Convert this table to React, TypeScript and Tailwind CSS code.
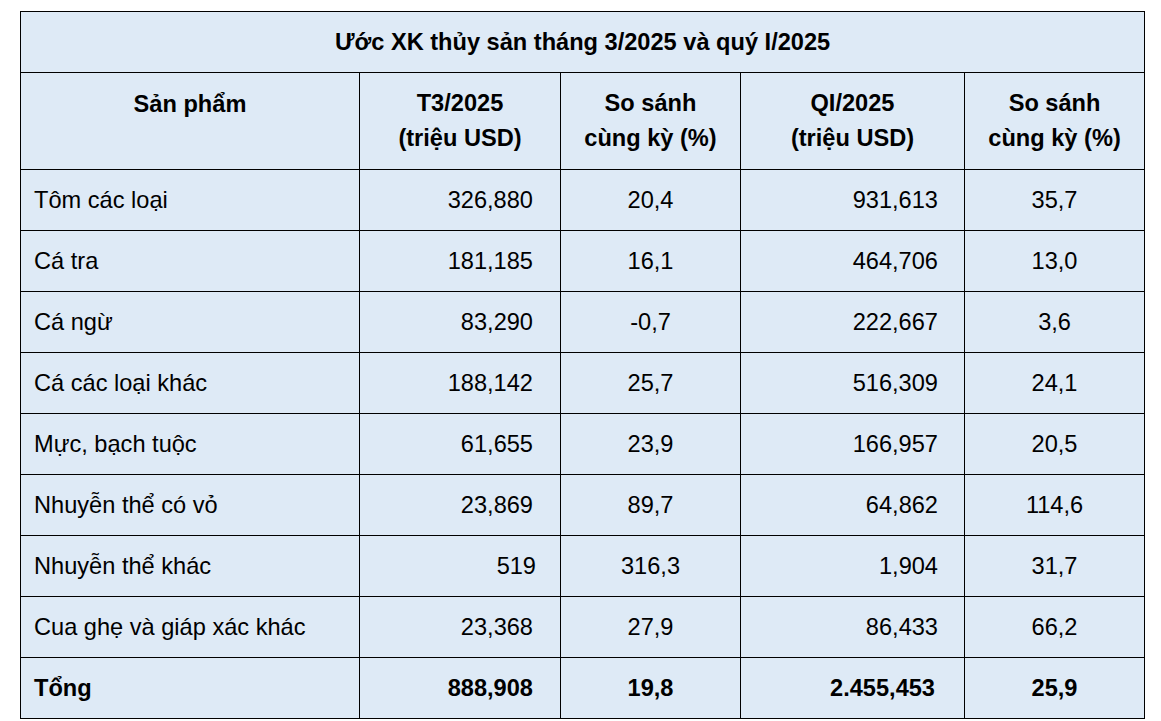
const rows = [
	['Tôm các loại', '326,880', '20,4', '931,613', '35,7'],
	['Cá tra', '181,185', '16,1', '464,706', '13,0'],
	['Cá ngừ', '83,290', '-0,7', '222,667', '3,6'],
	['Cá các loại khác', '188,142', '25,7', '516,309', '24,1'],
	['Mực, bạch tuộc', '61,655', '23,9', '166,957', '20,5'],
	['Nhuyễn thể có vỏ', '23,869', '89,7', '64,862', '114,6'],
	['Nhuyễn thể khác', '519', '316,3', '1,904', '31,7'],
	['Cua ghẹ và giáp xác khác', '23,368', '27,9', '86,433', '66,2'],
];

const cell = 'border border-black px-0 align-middle';

export default function App() {
	return (
		<div
			className="min-h-screen bg-white pt-[11px] pl-[20px] text-black"
			style={{ fontFamily: '"Liberation Sans", Arial, sans-serif' }}
		>
			<table className="table-fixed border-collapse bg-[#deeaf6] text-[23.6px] leading-[35px] w-[1125px]">
				<colgroup>
					<col className="w-[339px]" />
					<col className="w-[201px]" />
					<col className="w-[180px]" />
					<col className="w-[224px]" />
					<col className="w-[180px]" />
				</colgroup>
				<thead>
					<tr className="h-[61px]">
						<th colSpan={5} className={`${cell} text-center font-bold`}>
							Ước XK thủy sản tháng 3/2025 và quý I/2025
						</th>
					</tr>
					<tr className="h-[97px]">
						<th className={`${cell} text-center font-bold align-top pt-[14px]`}>
							Sản phẩm
						</th>
						<th className={`${cell} text-center font-bold`}>
							T3/2025
							<br />
							(triệu USD)
						</th>
						<th className={`${cell} text-center font-bold`}>
							So sánh
							<br />
							cùng kỳ (%)
						</th>
						<th className={`${cell} text-center font-bold`}>
							QI/2025
							<br />
							(triệu USD)
						</th>
						<th className={`${cell} text-center font-bold`}>
							So sánh
							<br />
							cùng kỳ (%)
						</th>
					</tr>
				</thead>
				<tbody>
					{rows.map((r) => (
						<tr key={r[0]} className="h-[61px]">
							<td className={`${cell} pl-[13px]`}>{r[0]}</td>
							{/* 519 sits a few px further right in the source */}
							<td className={`${cell} text-right ${r[1] === '519' ? 'pr-[24px]' : 'pr-[27px]'}`}>{r[1]}</td>
							<td className={`${cell} text-center`}>{r[2]}</td>
							<td className={`${cell} text-right pr-[26px]`}>{r[3]}</td>
							<td className={`${cell} text-center`}>{r[4]}</td>
						</tr>
					))}
					<tr className="h-[61px] font-bold">
						<td className={`${cell} pl-[13px]`}>Tổng</td>
						<td className={`${cell} text-right pr-[27px]`}>888,908</td>
						<td className={`${cell} text-center`}>19,8</td>
						<td className={`${cell} text-right pr-[29px]`}>2.455,453</td>
						<td className={`${cell} text-center`}>25,9</td>
					</tr>
				</tbody>
			</table>
		</div>
	);
}
